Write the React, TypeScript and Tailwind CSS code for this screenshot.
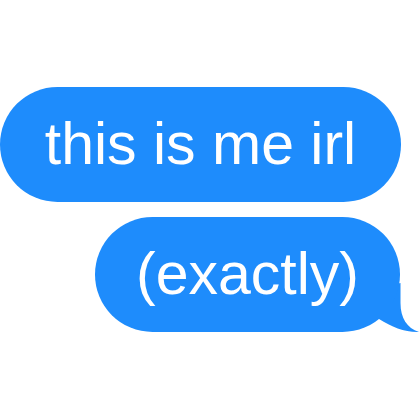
import React from "react";

export default function App() {
  return (
    <div className="w-[420px] h-[420px] bg-white flex flex-col pt-[87px] gap-[15px]" style={{ fontFamily: '"Liberation Sans", Arial, sans-serif' }}>
      <div className="w-[401px] h-[115px] rounded-full bg-[#1e8cfc] flex items-center justify-center">
        <span className="text-white text-[59px] leading-normal">this is me irl</span>
      </div>
      <div className="relative ml-[95px] w-[305px] h-[115px]">
        <svg className="absolute left-0 top-0 overflow-visible" width="325" height="116" viewBox="0 0 325 116">
          <path d="M275 73 L305.5 66 L305.5 86 C305.5 101 312 111 324 115 C310 115.5 297 110 284 102 Z" fill="#1e8cfc" />
        </svg>
        <div className="relative w-[305px] h-[115px] rounded-full bg-[#1e8cfc] flex items-center justify-center">
          <span className="text-white text-[59px] leading-normal">(exactly)</span>
        </div>
      </div>
    </div>
  );
}
